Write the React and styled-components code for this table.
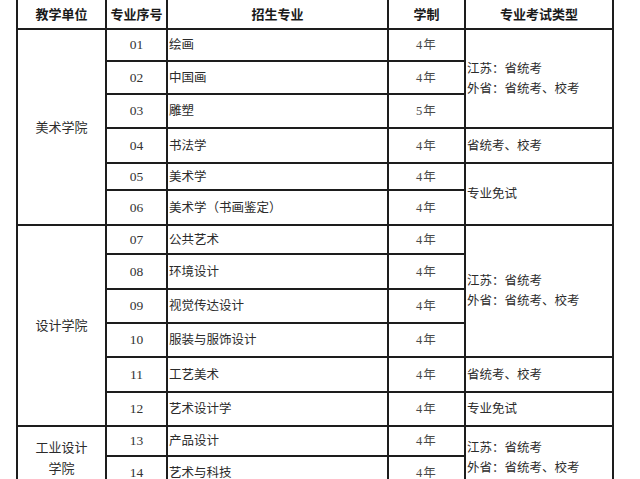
import React from 'react';
import styled, { createGlobalStyle } from 'styled-components';

const GlobalStyle = createGlobalStyle`
  html, body {
    margin: 0;
    padding: 0;
    background: #fff;
    overflow: hidden;
  }
  body {
    font-family: "Liberation Serif", "Noto Sans CJK SC", serif;
  }
`;

// heights of the grid rows, header first
const rowHeights = [30, 30, 31, 32, 33, 25, 33, 27, 33, 32, 32, 33, 32, 28, 32];

const JS_EXAM = '江苏：省统考\n外省：省统考、校考';

const groups = [
  {
    unit: '美术学院',
    majors: [
      ['01', '绘画'],
      ['02', '中国画'],
      ['03', '雕塑', '5年'],
      ['04', '书法学'],
      ['05', '美术学'],
      ['06', '美术学（书画鉴定）'],
    ],
    exams: [
      [3, JS_EXAM],
      [1, '省统考、校考'],
      [2, '专业免试'],
    ],
  },
  {
    unit: '设计学院',
    majors: [
      ['07', '公共艺术'],
      ['08', '环境设计'],
      ['09', '视觉传达设计'],
      ['10', '服装与服饰设计'],
      ['11', '工艺美术'],
      ['12', '艺术设计学'],
    ],
    exams: [
      [4, JS_EXAM],
      [1, '省统考、校考'],
      [1, '专业免试'],
    ],
  },
  {
    unit: '工业设计\n学院',
    majors: [
      ['13', '产品设计'],
      ['14', '艺术与科技'],
    ],
    exams: [[2, JS_EXAM]],
  },
];

const App = () => {
  return (
    <>
      <GlobalStyle />
      <Sheet>
        <HeadCell>教学单位</HeadCell>
        <HeadCell>专业序号</HeadCell>
        <HeadCell>招生专业</HeadCell>
        <HeadCell>学制</HeadCell>
        <HeadCell>专业考试类型</HeadCell>

        {groups.map((g) => {
          // which row starts an exam block
          const examAt = {};
          let r = 0;
          g.exams.forEach(([span, text]) => {
            examAt[r] = { span, text };
            r += span;
          });

          return g.majors.map(([no, name, years], i) => (
            <React.Fragment key={no}>
              {i === 0 && <UnitCell $span={g.majors.length}>{g.unit}</UnitCell>}
              <NumberCell>{no}</NumberCell>
              <Cell $left>{name}</Cell>
              <YearCell>{years || '4年'}</YearCell>
              {examAt[i] && (
                <Cell $left $span={examAt[i].span}>
                  {examAt[i].text}
                </Cell>
              )}
            </React.Fragment>
          ));
        })}
      </Sheet>
    </>
  );
};

export default App;

const Sheet = styled.div`
  display: grid;
  grid-template-columns: 87px 59px 219px 75px 146px;
  grid-template-rows: ${rowHeights.map((h) => h + 'px').join(' ')};
  gap: 2px;
  padding: 2px;
  width: max-content;
  margin: -4px 0 0 16px;
  background: #1d1d1d;
`;

const HeadCell = styled.div`
  background: #fff;
  display: flex;
  align-items: center;
  justify-content: center;
  font-family: "Noto Sans CJK SC", sans-serif;
  font-weight: 700;
  font-size: 13px;
  color: #1a1a1a;
`;

const Cell = styled.div`
  background: #fff;
  display: flex;
  align-items: center;
  justify-content: ${(p) => (p.$left ? 'flex-start' : 'center')};
  grid-row: span ${(p) => p.$span || 1};
  padding: 0 1px;
  font-size: 12.5px;
  line-height: 20px;
  color: #2b2b2b;
  white-space: pre-line;
  text-align: ${(p) => (p.$left ? 'left' : 'center')};
`;

const UnitCell = styled(Cell)`
  line-height: 21px;
  font-size: 13px;
`;

const NumberCell = styled(Cell)`
  font-size: 13.5px;
  color: #333;
`;

const YearCell = styled(Cell)`
  color: #4a4a4a;
  letter-spacing: 1px;
`;
